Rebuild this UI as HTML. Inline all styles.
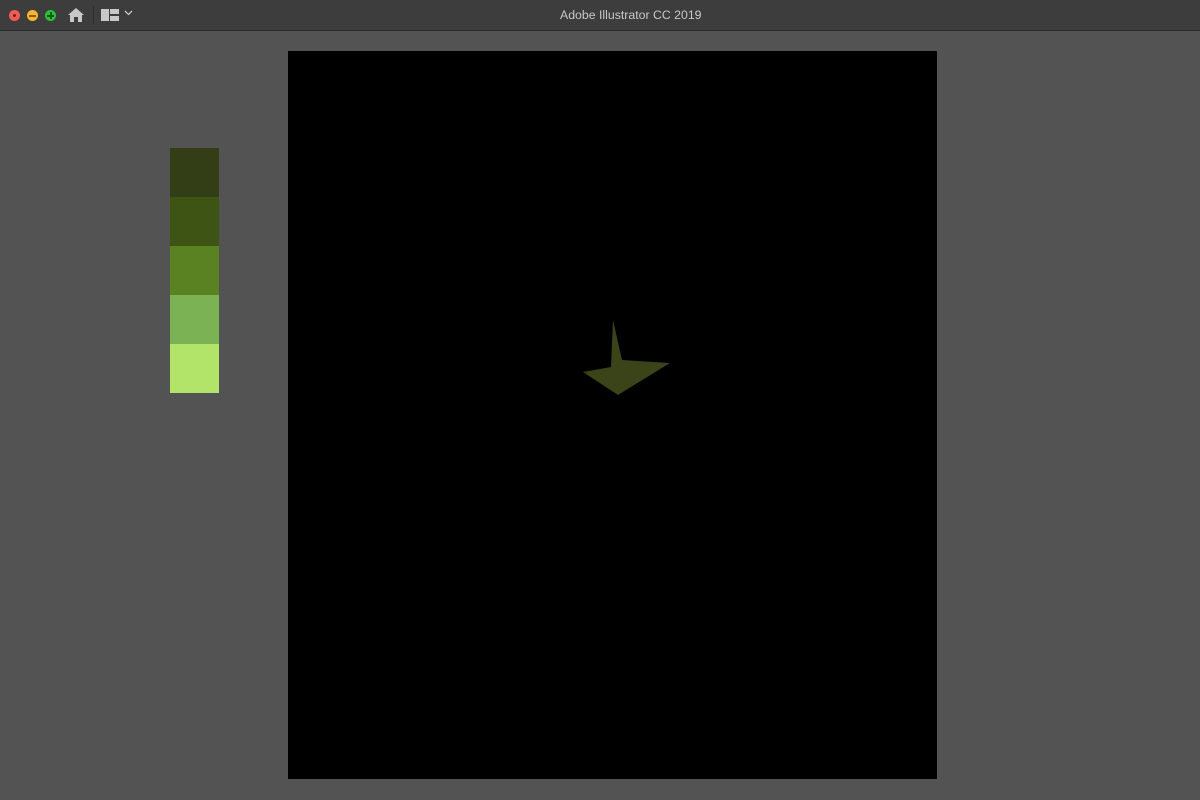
<!DOCTYPE html>
<html><head><meta charset="utf-8"><style>
html,body{margin:0;padding:0;width:1200px;height:800px;overflow:hidden;background:#535353;font-family:"Liberation Sans",sans-serif}
.bar{position:absolute;left:0;top:0;width:1200px;height:30px;background:#3d3d3d;border-bottom:1px solid #2a2a2a}
.dot{position:absolute;top:10px;width:11px;height:11px;border-radius:50%}
.title{position:absolute;left:560px;top:8px;color:#c8c8c8;font-size:12.3px;white-space:nowrap}
.sw{position:absolute;left:170px;width:49px}
</style></head><body>
<div class="bar">
<div class="dot" style="left:9px;background:#f25b55"><div style="position:absolute;left:4px;top:4px;width:3px;height:3px;border-radius:50%;background:#7a1a14"></div></div>
<div class="dot" style="left:27px;background:#f6b62d"><div style="position:absolute;left:2px;top:5px;width:7px;height:1.5px;background:#8a5a00"></div></div>
<div class="dot" style="left:45px;background:#2ac13c"><div style="position:absolute;left:2px;top:5px;width:7px;height:1.5px;background:#0a5a10"></div><div style="position:absolute;left:5px;top:2px;width:1.5px;height:7px;background:#0a5a10"></div></div>
<svg style="position:absolute;left:67px;top:7px" width="18" height="16" viewBox="0 0 18 16"><path d="M9 1 L17 8 L15 8 L15 15 L11 15 L11 10 L7 10 L7 15 L3 15 L3 8 L1 8 Z" fill="#c8c8c8"/></svg>
<div style="position:absolute;left:93px;top:6px;width:1px;height:18px;background:#2c2c2c"></div>
<svg style="position:absolute;left:101px;top:9px" width="18" height="12"><rect x="0" y="0" width="8" height="12" fill="#c8c8c8"/><rect x="9" y="0" width="9" height="5" fill="#c8c8c8"/><rect x="9" y="7" width="9" height="5" fill="#c8c8c8"/></svg>
<svg style="position:absolute;left:124px;top:10px" width="9" height="6"><path d="M1 1 L4.5 4.5 L8 1" stroke="#c8c8c8" fill="none" stroke-width="1.3"/></svg>
<div class="title">Adobe Illustrator CC 2019</div>
</div>
<div class="sw" style="top:148px;height:49px;background:#333d16"></div>
<div class="sw" style="top:197px;height:49px;background:#3d5414"></div>
<div class="sw" style="top:246px;height:49px;background:#5a8222"></div>
<div class="sw" style="top:295px;height:49px;background:#7bb254"></div>
<div class="sw" style="top:344px;height:49px;background:#b2e46a"></div>
<div style="position:absolute;left:288px;top:51px;width:649px;height:728px;background:#000"></div>
<svg style="position:absolute;left:0;top:0" width="1200" height="800"><polygon points="613,320 622,360 670,363 618,395 583,372 611,367" fill="#3b4318"/></svg>
</body></html>
